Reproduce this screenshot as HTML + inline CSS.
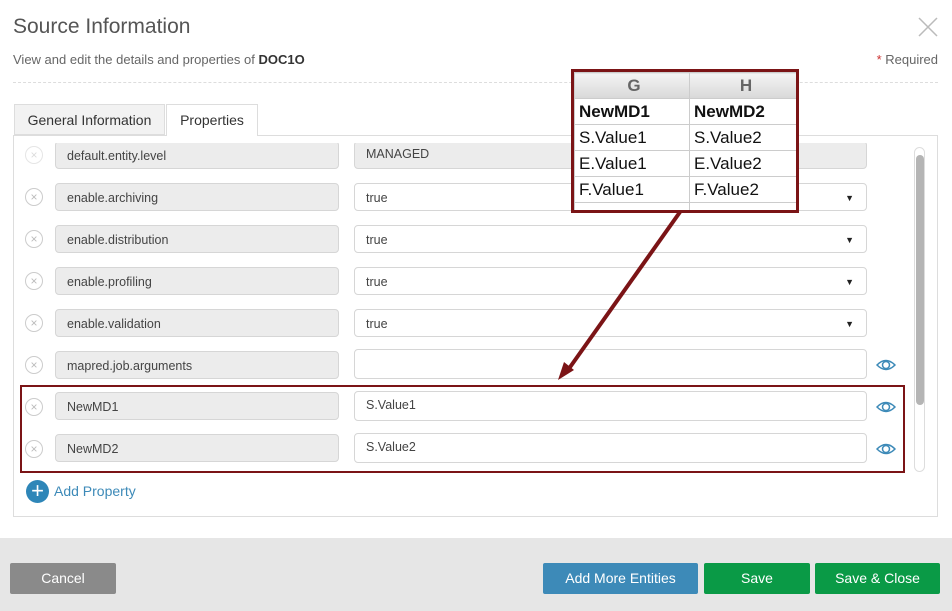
<!DOCTYPE html>
<html><head><style>
body{margin:0;width:952px;height:611px;background:#fff;font-family:"Liberation Sans",sans-serif;position:relative;overflow:hidden;color:#555}
.a{position:absolute}
.f{position:absolute;height:28px;border:1px solid #d6d6d6;border-radius:4px;box-sizing:border-box;font-size:12.5px;color:#444;padding-left:11px;line-height:28px}
.n{left:55px;width:284px;background:#ececec}
.v{left:354px;width:513px;background:#fff}
.x{position:absolute;left:25px;width:18px;height:18px;border:1.5px solid #ccc;border-radius:50%;box-sizing:border-box;color:#bbb;font-size:12px;text-align:center;line-height:16px}
.dd{position:absolute;right:12px;font-size:9px;color:#222}
.btn{position:absolute;top:563px;height:31px;color:#fff;font-size:14px;text-align:center;line-height:31px;border-radius:2px}
table{border-collapse:collapse}
td{border:1px solid #ccc;font-size:17px;color:#111;padding:0 0 0 4px;height:25px}
</style></head><body>
<div class="a" style="left:13px;top:15px;font-size:21px;color:#555">Source Information</div>
<svg class="a" style="left:918px;top:17px" width="20" height="20"><path d="M1 1L19 19M19 1L1 19" stroke="#bbb" stroke-width="1.5"/></svg>
<div class="a" style="left:13px;top:52px;font-size:13px;color:#666">View and edit the details and properties of <b style="color:#333">DOC1O</b></div>
<div class="a" style="right:14px;top:52px;font-size:13px;color:#666"><span style="color:#c33">*</span> Required</div>
<div class="a" style="left:13px;top:82px;width:925px;border-top:1px dashed #ddd"></div>
<div class="a" style="left:13px;top:135px;width:923px;height:380px;border:1px solid #ddd"></div>
<div class="a" style="left:14px;top:104px;width:151px;height:31px;background:#f2f2f2;border:1px solid #ddd;box-sizing:border-box;font-size:14px;color:#333;text-align:center;line-height:31px">General Information</div>
<div class="a" style="left:166px;top:104px;width:92px;height:32px;background:#fff;border:1px solid #ddd;border-bottom:none;box-sizing:border-box;font-size:14px;color:#333;text-align:center;line-height:31px">Properties</div>
<div class="a" style="left:14px;top:143px;width:900px;height:30px;overflow:hidden">
<div class="x" style="left:11px;top:3px;opacity:.5">×</div>
<div class="f n" style="left:41px;top:-2px;background:#ececec">default.entity.level</div>
<div class="f" style="left:340px;top:-2px;width:513px;background:#ececec;line-height:24px">MANAGED</div>
</div>
<div class="x" style="top:188px">×</div><div class="f n" style="top:183px">enable.archiving</div><div class="f v" style="top:183px">true<span class="dd">▼</span></div>
<div class="x" style="top:230px">×</div><div class="f n" style="top:225px">enable.distribution</div><div class="f v" style="top:225px">true<span class="dd">▼</span></div>
<div class="x" style="top:272px">×</div><div class="f n" style="top:267px">enable.profiling</div><div class="f v" style="top:267px">true<span class="dd">▼</span></div>
<div class="x" style="top:314px">×</div><div class="f n" style="top:309px">enable.validation</div><div class="f v" style="top:309px">true<span class="dd">▼</span></div>
<div class="x" style="top:356px">×</div><div class="f n" style="top:351px">mapred.job.arguments</div><div class="f v" style="top:349px;height:30px"></div>
<div class="x" style="top:398px">×</div><div class="f n" style="top:392px">NewMD1</div><div class="f v" style="top:391px;height:30px;line-height:26px">S.Value1</div>
<div class="x" style="top:440px">×</div><div class="f n" style="top:434px">NewMD2</div><div class="f v" style="top:433px;height:30px;line-height:26px">S.Value2</div>
<svg class="a" style="left:876px;top:357px" width="20" height="100"><g fill="none" stroke="#3d8ab8" stroke-width="1.5"><path d="M1 8Q10 -1 19 8Q10 17 1 8Z"/><circle cx="10" cy="8" r="3.5"/><path d="M1 50Q10 41 19 50Q10 59 1 50Z"/><circle cx="10" cy="50" r="3.5"/><path d="M1 92Q10 83 19 92Q10 101 1 92Z"/><circle cx="10" cy="92" r="3.5"/></g></svg>
<div class="a" style="left:914px;top:147px;width:11px;height:325px;border:1px solid #ddd;border-radius:6px;box-sizing:border-box"></div>
<div class="a" style="left:916px;top:155px;width:8px;height:250px;background:#b5b5b5;border-radius:4px"></div>
<div class="a" style="left:20px;top:385px;width:885px;height:88px;border:2px solid #7b1416;box-sizing:border-box"></div>
<div class="a" style="left:26px;top:480px;width:23px;height:23px;border-radius:50%;background:#2e86b8;color:#fff;font-size:22px;text-align:center;line-height:22px">+</div>
<div class="a" style="left:54px;top:483px;font-size:14px;color:#3d8ab8">Add Property</div>
<div class="a" style="left:0;top:538px;width:952px;height:73px;background:#e6e6e6"></div>
<div class="btn" style="left:10px;width:106px;background:#8a8a8a">Cancel</div>
<div class="btn" style="left:543px;width:155px;background:#3d8ab8">Add More Entities</div>
<div class="btn" style="left:704px;width:106px;background:#0a9a46">Save</div>
<div class="btn" style="left:815px;width:125px;background:#0a9a46">Save &amp; Close</div>
<div class="a" style="left:571px;top:69px;width:228px;height:144px;border:3px solid #7b1416;box-sizing:border-box;background:#fff;overflow:hidden">
<table style="width:225px">
<tr><td style="background:linear-gradient(#f4f4f4,#d8d8d8);text-align:center;color:#666;font-weight:bold;height:24px;width:110px">G</td><td style="background:linear-gradient(#f4f4f4,#d8d8d8);text-align:center;color:#666;font-weight:bold">H</td></tr>
<tr><td style="font-weight:bold">NewMD1</td><td style="font-weight:bold">NewMD2</td></tr>
<tr><td>S.Value1</td><td>S.Value2</td></tr>
<tr><td>E.Value1</td><td>E.Value2</td></tr>
<tr><td>F.Value1</td><td>F.Value2</td></tr>
<tr><td style="height:8px"></td><td></td></tr>
</table></div>
<svg class="a" style="left:0;top:0" width="952" height="611"><line x1="680" y1="212" x2="568" y2="370" stroke="#7b1416" stroke-width="4"/><path d="M558 380L564 362L574 370Z" fill="#7b1416"/></svg>
</body></html>
